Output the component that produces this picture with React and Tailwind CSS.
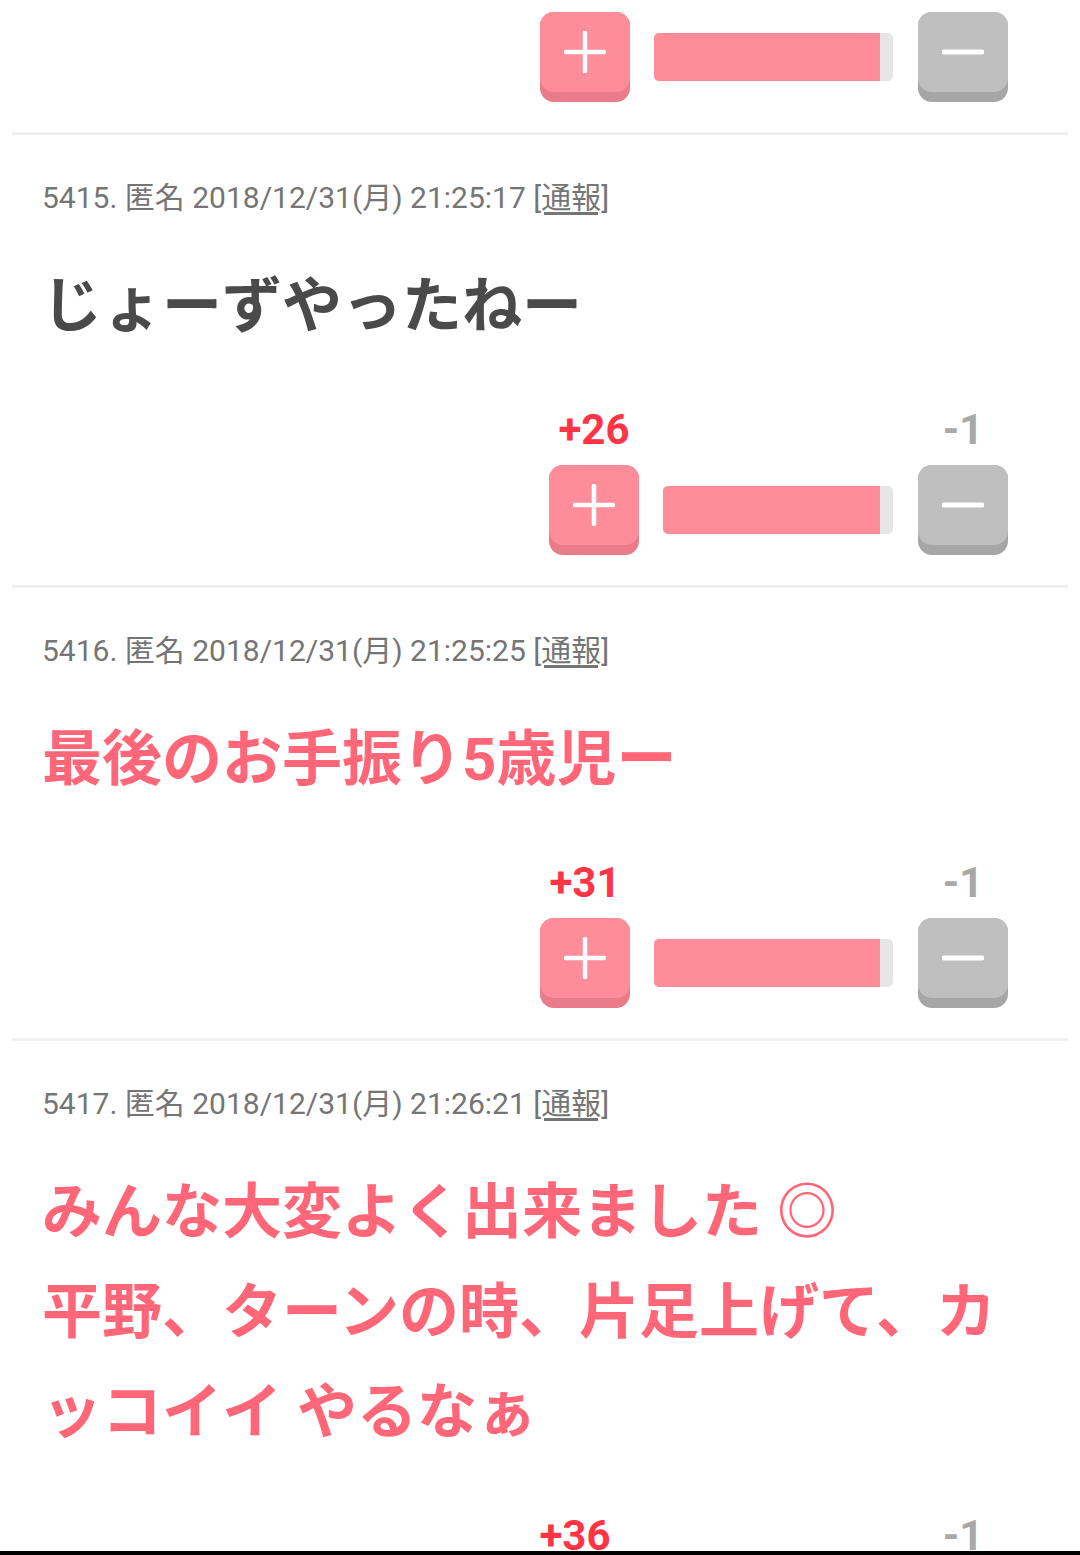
import React from 'react';

const posts = [
  { no: 5415, time: '2018/12/31(月) 21:25:17', body: ['じょーずやったねー'], pink: false, plus: 26, minus: 1, bar: 230 },
  { no: 5416, time: '2018/12/31(月) 21:25:25', body: ['最後のお手振り5歳児ー'], pink: true, plus: 31, minus: 1, bar: 239 },
  {
    no: 5417,
    time: '2018/12/31(月) 21:26:21',
    body: ['みんな大変よく出来ました ◎', '平野、ターンの時、片足上げて、カ', 'ッコイイ やるなぁ'],
    pink: true,
    plus: 36,
    minus: 1,
    bar: 249,
  },
];

const font = "font-['Roboto','Noto_Sans_CJK_JP',sans-serif]";

function PlusButton() {
  return (
    <div className="h-[90px] w-[90px] rounded-[14px] bg-[#e97c88]">
      <div className="flex h-[80px] items-center justify-center rounded-[14px] bg-[#ff8d99]">
        <svg width="42" height="42" viewBox="0 0 42 42">
          <line x1="21" y1="2" x2="21" y2="40" stroke="#fff" strokeWidth="4.5" strokeLinecap="round" />
          <line x1="2" y1="21" x2="40" y2="21" stroke="#fff" strokeWidth="4.5" strokeLinecap="round" />
        </svg>
      </div>
    </div>
  );
}

function MinusButton() {
  return (
    <div className="h-[90px] w-[90px] rounded-[14px] bg-[#a6a6a6]">
      <div className="flex h-[80px] items-center justify-center rounded-[14px] bg-[#bfbfbf]">
        <svg width="42" height="42" viewBox="0 0 42 42">
          <line x1="2" y1="21" x2="40" y2="21" stroke="#fff" strokeWidth="5" strokeLinecap="round" />
        </svg>
      </div>
    </div>
  );
}

function VoteRow({ plus, minus, bar }) {
  const showLabels = plus !== undefined;
  return (
    <div className="flex items-end justify-end pr-[30px]">
      <div className="flex flex-col items-center">
        {showLabels && (
          <div className={`${font} mb-[10px] text-[42px] font-bold leading-[50px] text-[#ff3445]`}>+{plus}</div>
        )}
        <PlusButton />
      </div>
      <div
        className="mb-[21px] ml-[24px] mr-[25px] flex h-[48px] overflow-hidden rounded-[5px] bg-[#e6e6e6] pr-[13px]"
        style={{ width: bar }}
      >
        <div className="flex-1 bg-[#ff8d99]" />
      </div>
      <div className="flex flex-col items-center">
        {showLabels && (
          <div className={`${font} mb-[10px] text-[42px] font-bold leading-[50px] text-[#a8a8a8]`}>-{minus}</div>
        )}
        <MinusButton />
      </div>
    </div>
  );
}

function Post({ post }) {
  return (
    <div className="mx-3 border-b-[3px] border-[#f0f0f0] px-[30px] pb-[30px] pt-[43px]">
      <div className={`${font} text-[30px] leading-[40px] text-[#757575]`}>
        {post.no}. 匿名 {post.time} <span className="underline underline-offset-4">[通報]</span>
      </div>
      <div
        className={`${font} mt-[39px] text-[60px] font-bold leading-[100px] ${
          post.pink ? 'text-[#ff6677]' : 'text-[#4a4a4a]'
        }`}
      >
        {post.body.map((line, i) => (
          <div key={i} className="whitespace-nowrap">
            {line}
          </div>
        ))}
      </div>
      <div className="mt-[48px]">
        <VoteRow plus={post.plus} minus={post.minus} bar={post.bar} />
      </div>
    </div>
  );
}

export default function App() {
  return (
    <div className="flex h-[1555px] w-[1080px] flex-col overflow-hidden bg-white">
      <div className="flex-1 overflow-hidden">
        {/* tail of the previous post */}
        <div className="mx-3 border-b-[3px] border-[#f0f0f0] px-[30px] pb-[30px] pt-[12px]">
          <VoteRow bar={239} />
        </div>
        {posts.map((p) => (
          <Post key={p.no} post={p} />
        ))}
      </div>
      <div className="h-[4px] bg-black" />
    </div>
  );
}
